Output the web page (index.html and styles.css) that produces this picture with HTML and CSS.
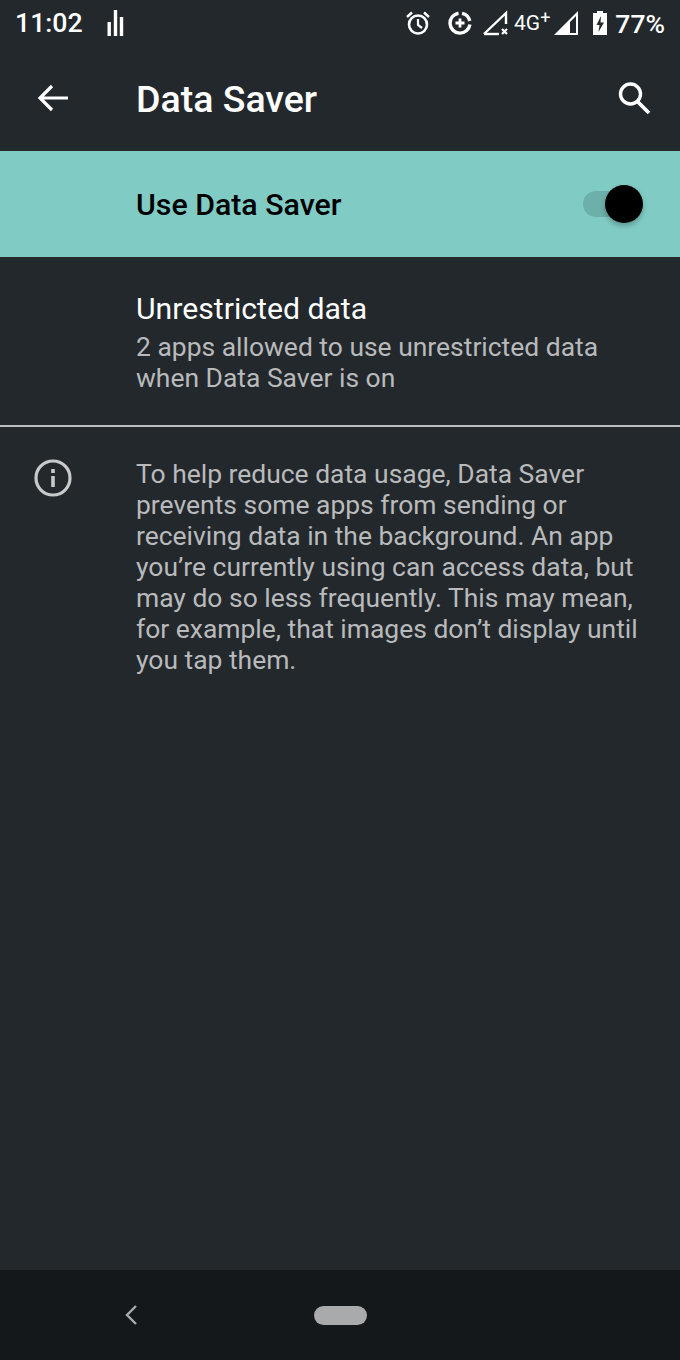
FILE: index.html
```html
<!DOCTYPE html>
<html lang="en">
<head>
	<meta charset="UTF-8">
	<title>Data Saver</title>
	<link rel="stylesheet" href="styles.css">
</head>
<body>
	<main class="phone">
		<!-- status bar -->
		<header class="status">
			<div class="status-left">
				<span class="clock">11:02</span>
				<svg class="eq" width="18" height="26" viewBox="0 0 18 26">
					<rect x="0.500" y="12" width="3.400" height="14" fill="#fff"/>
					<rect x="6.800" y="0" width="3.400" height="26" fill="#fff"/>
					<rect x="12.800" y="7" width="3.400" height="19" fill="#fff"/>
				</svg>
			</div>
			<div class="status-right">
				<svg class="alarm" width="26" height="26" viewBox="0 0 26 26" fill="none" stroke="#fff">
					<circle cx="13" cy="14.500" r="9" stroke-width="2.600"/>
					<path d="M13 9v6l4 3" stroke-width="2.200"/>
					<path d="M2 7l5-4.500M24 7l-5-4.500" stroke-width="2.400"/>
				</svg>
				<svg class="saver" width="26" height="26" viewBox="0 0 26 26" fill="none" stroke="#fff">
					<path d="M11.500 3.200a10 10 0 1 0 11.400 11.300" stroke-width="3.400"/>
					<path d="M15 3.400a10 10 0 0 1 7.800 7.600" stroke-width="3.400"/>
					<path d="M13 8.500v9M8.500 13h9" stroke-width="2.800"/>
				</svg>
				<svg class="nosim" width="28" height="26" viewBox="0 0 28 26" fill="none" stroke="#fff">
					<path d="M2 24L24 3v11" stroke-width="2.400"/>
					<path d="M2 24h15" stroke-width="2.400"/>
					<path d="M20 19l5 5M25 19l-5 5" stroke-width="2.200"/>
				</svg>
				<span class="net">4G<sup>+</sup></span>
				<svg class="signal" width="25" height="26" viewBox="0 0 25 26">
					<path d="M0 25L24 1v24zM22 6l-6 6v11h6z" fill="#fff" fill-rule="evenodd"/>
				</svg>
				<svg class="battery" width="16" height="26" viewBox="0 0 16 26">
					<path d="M5 1h6v2h4v22H1V3h4z" fill="#fff"/>
					<path d="M9 6L4.500 15h3L6.500 22 12 12.500H8.500z" fill="#23282d"/>
				</svg>
				<span class="pct">77%</span>
			</div>
		</header>

		<!-- app bar -->
		<div class="appbar">
			<svg class="back" width="32" height="32" viewBox="0 0 32 32" fill="none" stroke="#fff" stroke-width="3.200">
				<path d="M31 16H3M15 4L3 16l12 12"/>
			</svg>
			<h1>Data Saver</h1>
			<svg class="search" width="36" height="36" viewBox="0 0 36 36" fill="none" stroke="#fff">
				<circle cx="14.500" cy="14" r="10" stroke-width="3.400"/>
				<path d="M21.500 21.500L33 33" stroke-width="3.800"/>
			</svg>
		</div>

		<!-- master switch -->
		<section class="master">
			<span class="master-label">Use Data Saver</span>
			<div class="switch">
				<div class="track"></div>
				<div class="thumb"></div>
			</div>
		</section>

		<section class="row">
			<div class="row-title">Unrestricted data</div>
			<div class="row-sub">2 apps allowed to use unrestricted data<br>when Data Saver is on</div>
		</section>

		<section class="footer-info">
			<div class="info-icon">
				<svg width="40" height="40" viewBox="0 0 40 40" fill="none" stroke="#c8c9ca" stroke-width="3.200">
					<circle cx="20" cy="20" r="17"/>
					<path d="M20 18v11" stroke-width="3.600"/>
					<path d="M20 11v4" stroke-width="3.600"/>
				</svg>
			</div>
			<p>To help reduce data usage, Data Saver prevents some apps from sending or receiving data in the background. An app you’re currently using can access data, but may do so less frequently. This may mean, for example, that images don’t display until you tap them.</p>
		</section>
		<div class="spacer"></div>

		<!-- nav bar -->
		<footer class="nav">
			<svg class="nav-back" width="14" height="22" viewBox="0 0 14 22" fill="none" stroke="#a9aaab" stroke-width="2.400">
				<path d="M12 2L3 11l9 9"/>
			</svg>
			<div class="pill"></div>
		</footer>
	</main>
</body>
</html>
```

FILE: styles.css
```css
* {
	box-sizing: border-box;
}
html, body {
	margin: 0;
	padding: 0;
}
body {
	background-color: #23282d;
	font-family: Roboto, "Liberation Sans", sans-serif;
}
svg {
	display: block;
	flex: none;
}

.phone {
	display: flex;
	flex-direction: column;
	height: 1360px;
	width: 680px;
	overflow: hidden;
}

/* status bar */
.status {
	align-items: center;
	color: #fff;
	display: flex;
	height: 48px;
	justify-content: space-between;
	padding: 0 15px 2px 15px;
}
.status-left, .status-right {
	align-items: center;
	display: flex;
}
.clock {
	font-size: 26.700px;
	font-weight: 500;
}
.eq {
	margin-left: 24px;
}
.saver {
	margin-left: 16px;
}
.nosim {
	margin-left: 9px;
}
.net {
	font-size: 21px;
	margin-left: 4px;
	white-space: nowrap;
}
.net sup {
	font-size: 18px;
	line-height: 0;
	vertical-align: 6px;
}
.signal {
	margin-left: 4px;
}
.battery {
	margin-left: 13px;
}
.pct {
	font-size: 26.500px;
	font-weight: 500;
	margin-left: 7px;
}

/* app bar */
.appbar {
	align-items: center;
	display: flex;
	height: 103px;
	padding: 0 28px 4px 37px;
}
.appbar h1 {
	color: #fff;
	flex: 1;
	font-size: 37.500px;
	font-weight: 500;
	margin: 2px 0 0 67px;
}

/* master switch */
.master {
	align-items: center;
	background-color: #80cbc4;
	display: flex;
	height: 106px;
	justify-content: space-between;
	padding: 0 37px 0 136px;
}
.master-label {
	color: #000;
	font-size: 30.300px;
	font-weight: 500;
}
.switch {
	height: 38px;
	position: relative;
	width: 60px;
}
.track {
	background-color: #6cb0a9;
	border-radius: 13px;
	height: 26px;
	margin-top: 6px;
	width: 54px;
}
.thumb {
	background-color: #000;
	border-radius: 50%;
	box-shadow: 0 3px 5px rgba(0, 0, 0, 0.25);
	height: 38px;
	position: absolute;
	right: 0;
	top: 0;
	width: 38px;
}

/* rows */
.row {
	border-bottom: 2px solid #bdbebf;
	height: 170px;
	padding: 33px 0 0 136px;
}
.row-title {
	color: #fff;
	font-size: 30.200px;
	line-height: 38px;
}
.row-sub {
	color: #b9babb;
	font-size: 26.450px;
	line-height: 31px;
	margin-top: 3px;
}

.footer-info {
	display: flex;
	padding: 31px 30px 0 33px;
}
.info-icon {
	width: 103px;
}
.footer-info p {
	color: #b9babb;
	flex: 1;
	font-size: 26.450px;
	line-height: 31px;
	margin: 0;
	max-width: 505px;
}
.spacer {
	flex: 1;
}

/* nav bar */
.nav {
	align-items: center;
	background-color: #15181b;
	display: flex;
	height: 90px;
	padding: 0 0 0 124px;
}
.pill {
	background-color: #a9aaab;
	border-radius: 10px;
	height: 19px;
	margin-left: 176px;
	width: 53px;
}
```
